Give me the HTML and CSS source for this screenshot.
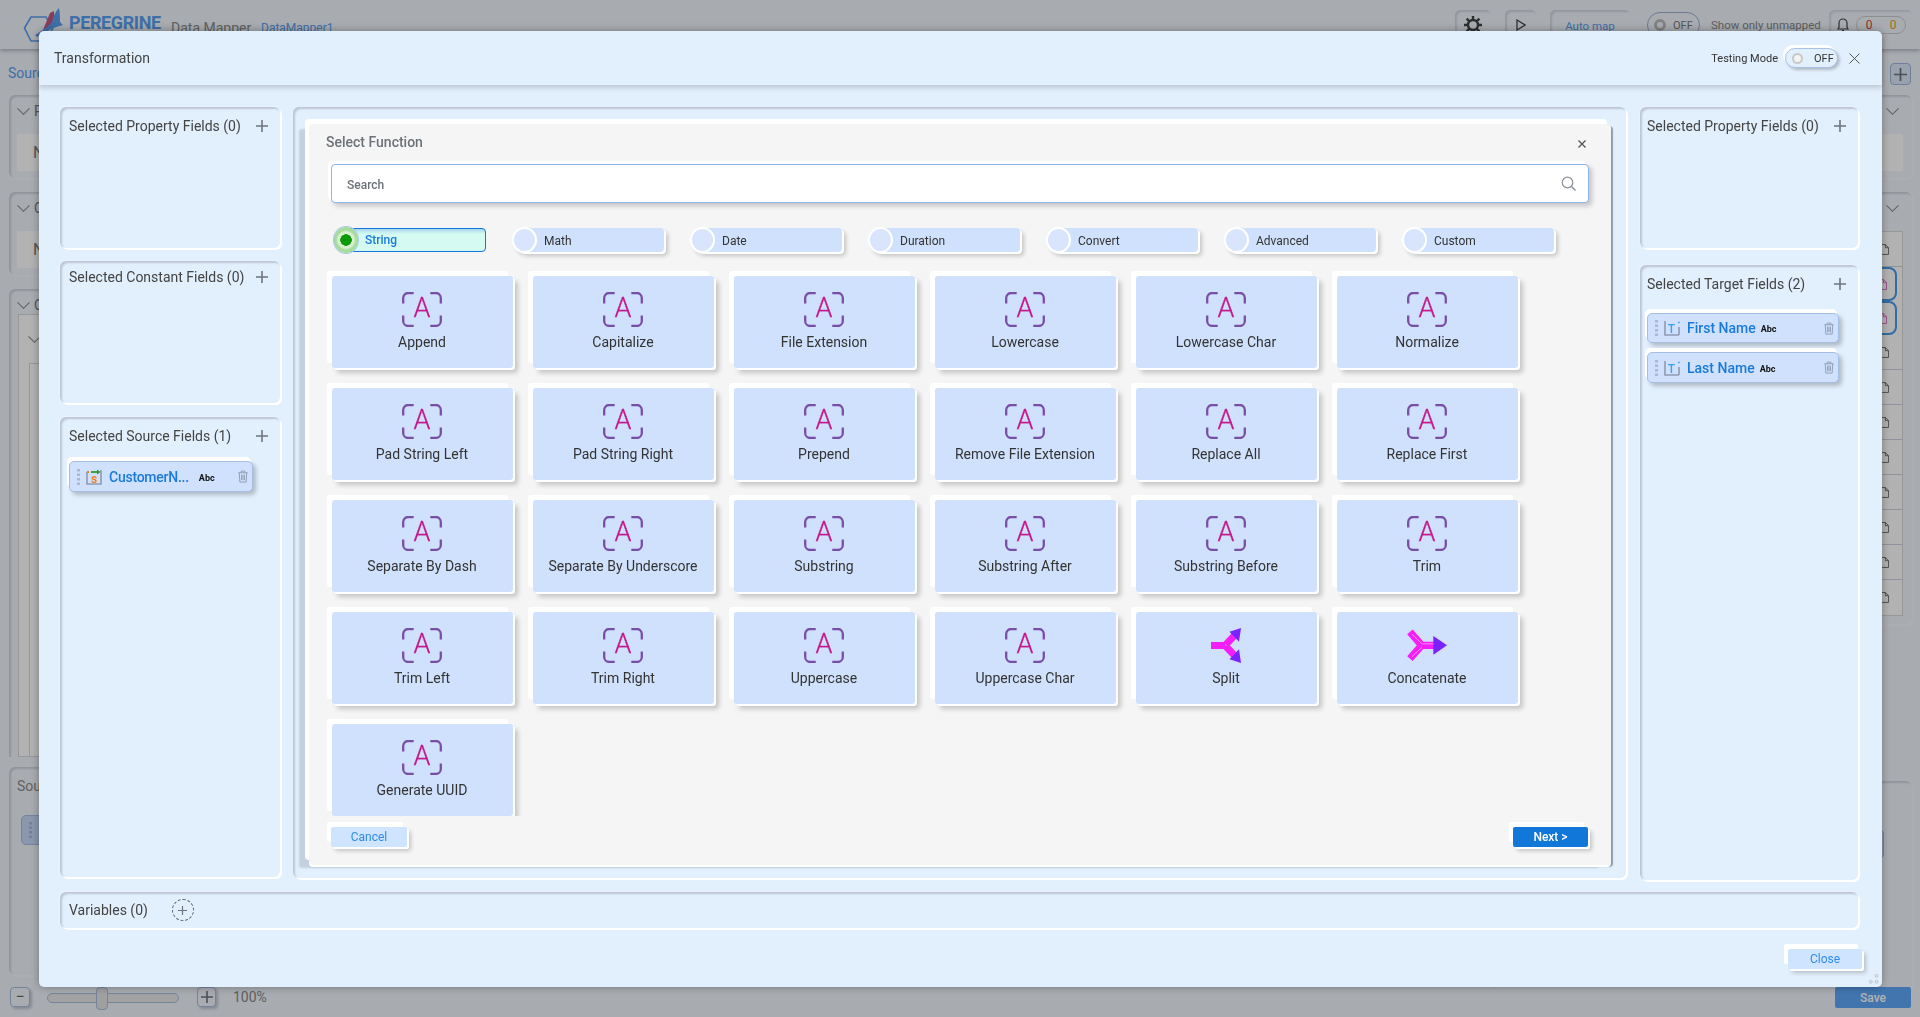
FILE: index.html
```html
<!DOCTYPE html>
<html lang="en">
<head>
<meta charset="utf-8">
<title>Peregrine Data Mapper</title>
<link rel="stylesheet" href="styles.css">
</head>
<body>
<svg class="defs" aria-hidden="true">
  <symbol id="ic-a" viewBox="0 0 40 35">
    <path class="ic-br" d="M1.200 11.500V6a5 5 0 0 1 5-5h5.500M28.300 1h5.500a5 5 0 0 1 5 5v5.500M38.800 23.500V29a5 5 0 0 1-5 5h-5.500M11.700 34H6.200a5 5 0 0 1-5-5v-5.500"/>
    <text class="ic-letter" x="20" y="25" text-anchor="middle">A</text>
  </symbol>
  <symbol id="ic-trash" viewBox="0 0 12 14">
    <path d="M1 3h10M4 3V1.200h4V3M2 3l.6 10h6.800L10 3M4.500 5v6M6 5v6M7.500 5v6" fill="none" stroke="#8d9cb4" stroke-width="1"/>
  </symbol>
  <symbol id="ic-dots" viewBox="0 0 3 16">
    <rect width="3" height="2.500" y="0" fill="#a8b8d4"/><rect width="3" height="2.500" y="4.500" fill="#a8b8d4"/><rect width="3" height="2.500" y="9" fill="#a8b8d4"/><rect width="3" height="2.500" y="13.500" fill="#a8b8d4"/>
  </symbol>
  <symbol id="ic-plus" viewBox="0 0 12 12">
    <path d="M6 0v12M0 6h12" stroke="#6e747c" stroke-width="1.600" fill="none"/>
  </symbol>
  <symbol id="ic-doc" viewBox="0 0 10 12">
    <path d="M.5.5h5.500l3.500 3.500v7.500h-9zM6 .5V4h3.500" fill="none" stroke="currentColor" stroke-width="1"/>
  </symbol>
</svg>

<div class="page">
  <header class="topbar">
    <div class="brand">
      <svg class="logo" viewBox="0 0 42 34" width="42" height="34">
        <path d="M1.500 20L8 9h15l7 11-7 13H8z" fill="none" stroke="#5a9ff0" stroke-width="1.600"/>
        <path d="M20 22L27 5l4-2v15z" fill="#c4557f"/>
        <path d="M12 27C20 22 26 18 29 14 30 8 33 3 36 0c1 5 1 10 1 14l3 3-10 3-16 9z" fill="#5a9ff0"/>
      </svg>
      <span class="brand-name">PEREGRINE</span>
      <span class="brand-app">Data Mapper</span>
      <span class="brand-doc">DataMapper1</span>
    </div>
    <div class="tools">
      <button class="tool tool-icon">
        <svg viewBox="0 0 18 18" width="18" height="18"><circle cx="9" cy="9" r="5" fill="none" stroke="#444" stroke-width="2.400"/><path d="M9 0v4M9 14v4M0 9h4M14 9h4M2.600 2.600l2.800 2.800M12.600 12.600l2.800 2.800M15.400 2.600l-2.800 2.800M5.400 12.600l-2.800 2.800" stroke="#444" stroke-width="2.400"/></svg>
      </button>
      <button class="tool tool-play">
        <svg viewBox="0 0 10 12" width="10" height="12"><path d="M1 1l8 5-8 5z" fill="none" stroke="#444" stroke-width="1.300"/></svg>
      </button>
      <button class="tool tool-auto">Auto map</button>
      <div class="bg-toggle"><span class="bg-knob"></span>OFF</div>
      <span class="unmapped">Show only unmapped</span>
      <div class="counts">
        <svg viewBox="0 0 12 14" width="12" height="14"><path d="M6 1a4 4 0 0 0-4 4v4L1 11h10L10 9V5a4 4 0 0 0-4-4zM5 12.500h2" fill="none" stroke="#444" stroke-width="1.200"/></svg>
        <div class="count-pill"><span class="c-red">0</span><span class="c-orange">0</span></div>
      </div>
    </div>
  </header>

  <div class="bg-tabs">
    <span class="bg-tab">Sources</span>
    <button class="bg-add"><svg width="13" height="13"><use href="#ic-plus"/></svg></button>
  </div>

  <div class="bg-main">
    <div class="bg-col">
      <section class="bg-panel bg-short"><div class="bg-head"><i class="chev"></i>P</div><div class="bg-cell">N</div></section>
      <section class="bg-panel bg-short"><div class="bg-head"><i class="chev"></i>C</div><div class="bg-cell">N</div></section>
      <section class="bg-panel bg-tall">
        <div class="bg-head"><i class="chev"></i>C</div>
        <div class="bg-tree"><div class="bg-head bg-head-in"><i class="chev"></i></div><div class="bg-tree-in"></div></div>
      </section>
      <section class="bg-panel bg-bottom"><div class="bg-src">Sou</div><div class="bg-chip"><svg width="3" height="16"><use href="#ic-dots"/></svg></div></section>
    </div>
    <div class="bg-col bg-col-right">
      <section class="bg-panel bg-short"><div class="bg-head bg-head-r"><i class="chev"></i></div><div class="bg-cell"></div></section>
      <section class="bg-panel bg-list">
        <div class="bg-head bg-head-r"><i class="chev"></i></div>
        <ul class="bg-rows">
          <li><svg width="9" height="11"><use href="#ic-doc"/></svg></li>
          <li class="sel"><svg width="9" height="11"><use href="#ic-doc"/></svg></li>
          <li class="sel"><svg width="9" height="11"><use href="#ic-doc"/></svg></li>
          <li><svg width="9" height="11"><use href="#ic-doc"/></svg></li>
          <li><svg width="9" height="11"><use href="#ic-doc"/></svg></li>
          <li><svg width="9" height="11"><use href="#ic-doc"/></svg></li>
          <li><svg width="9" height="11"><use href="#ic-doc"/></svg></li>
          <li><svg width="9" height="11"><use href="#ic-doc"/></svg></li>
          <li><svg width="9" height="11"><use href="#ic-doc"/></svg></li>
          <li><svg width="9" height="11"><use href="#ic-doc"/></svg></li>
          <li><svg width="9" height="11"><use href="#ic-doc"/></svg></li>
        </ul>
      </section>
      <section class="bg-panel bg-bottom bg-bottom-r"><div class="bg-chip bg-chip-r"></div></section>
    </div>
  </div>

  <footer class="bg-foot">
    <button class="bg-zoom">−</button>
    <div class="bg-slider"><span class="bg-thumb"></span></div>
    <button class="bg-zoom bg-zoom-plus"><svg width="12" height="12"><use href="#ic-plus"/></svg></button>
    <span class="bg-pct">100%</span>
    <button class="bg-save">Save</button>
  </footer>
</div>

<div class="backdrop"></div>

<div class="modal">
  <header class="modal-head">
    <h1 class="modal-title">Transformation</h1>
    <div class="modal-tools">
      <span class="test-label">Testing Mode</span>
      <div class="toggle"><span class="knob"></span><span>OFF</span></div>
      <svg class="modal-x" viewBox="0 0 11 11" width="11" height="11"><path d="M.5.5l10 10M10.500.5l-10 10" stroke="#555" stroke-width="1"/></svg>
    </div>
  </header>

  <div class="modal-body">
    <div class="col col-left">
      <section class="panel h-141">
        <div class="panel-head"><span>Selected Property Fields (0)</span><svg class="plus" width="12" height="12"><use href="#ic-plus"/></svg></div>
      </section>
      <section class="panel h-142 gap-13">
        <div class="panel-head head-tight"><span>Selected Constant Fields (0)</span><svg class="plus" width="12" height="12"><use href="#ic-plus"/></svg></div>
      </section>
      <section class="panel h-460 gap-14">
        <div class="panel-head"><span>Selected Source Fields (1)</span><svg class="plus" width="12" height="12"><use href="#ic-plus"/></svg></div>
        <div class="chip chip-source">
          <svg class="chip-dots" width="3" height="16"><use href="#ic-dots"/></svg>
          <svg class="chip-icon" viewBox="0 0 16 16" width="16" height="16">
            <path d="M1 3v12h14V1" fill="none" stroke="#8f9bb2" stroke-width="1.600"/>
            <path d="M1 3h2" stroke="#f07f22" stroke-width="2"/>
            <path d="M5 3h8" stroke="#2f9a35" stroke-width="1.800"/>
            <path d="M11 .5L14.500 3 11 5.500z" fill="#2f9a35"/>
            <text class="chip-s" x="8" y="14" text-anchor="middle">s</text>
          </svg>
          <span class="chip-name chip-name-source">CustomerN...</span>
          <span class="chip-type type-wide">Abc</span>
          <svg class="chip-trash" width="12" height="13"><use href="#ic-trash"/></svg>
        </div>
      </section>
    </div>

    <section class="center">
      <div class="dialog">
        <div class="dialog-head">
          <h2 class="dialog-title">Select Function</h2>
          <svg class="dialog-x" viewBox="0 0 8 8" width="8" height="8"><path d="M.5.5l7 7M7.500.5l-7 7" stroke="#555" stroke-width="1.300"/></svg>
        </div>
        <div class="search">
          <span class="search-text">Search</span>
          <svg class="search-icon" viewBox="0 0 15 15" width="15" height="15"><circle cx="6.500" cy="6.500" r="5.300" fill="none" stroke="#8a9097" stroke-width="1.200"/><path d="M10.500 10.500l4 4" stroke="#8a9097" stroke-width="1.400"/></svg>
        </div>
        <div class="pills">
          <div class="pill pill-on"><span class="radio"></span>String</div>
          <div class="pill"><span class="radio"></span>Math</div>
          <div class="pill"><span class="radio"></span>Date</div>
          <div class="pill"><span class="radio"></span>Duration</div>
          <div class="pill"><span class="radio"></span>Convert</div>
          <div class="pill"><span class="radio"></span>Advanced</div>
          <div class="pill"><span class="radio"></span>Custom</div>
        </div>
        <div class="fn-list">
          <div class="fn"><svg class="fn-a"><use href="#ic-a"/></svg><span>Append</span></div>
          <div class="fn"><svg class="fn-a"><use href="#ic-a"/></svg><span>Capitalize</span></div>
          <div class="fn"><svg class="fn-a"><use href="#ic-a"/></svg><span>File Extension</span></div>
          <div class="fn"><svg class="fn-a"><use href="#ic-a"/></svg><span>Lowercase</span></div>
          <div class="fn"><svg class="fn-a"><use href="#ic-a"/></svg><span>Lowercase Char</span></div>
          <div class="fn"><svg class="fn-a"><use href="#ic-a"/></svg><span>Normalize</span></div>
          <div class="fn"><svg class="fn-a"><use href="#ic-a"/></svg><span>Pad String Left</span></div>
          <div class="fn"><svg class="fn-a"><use href="#ic-a"/></svg><span>Pad String Right</span></div>
          <div class="fn"><svg class="fn-a"><use href="#ic-a"/></svg><span>Prepend</span></div>
          <div class="fn"><svg class="fn-a"><use href="#ic-a"/></svg><span>Remove File Extension</span></div>
          <div class="fn"><svg class="fn-a"><use href="#ic-a"/></svg><span>Replace All</span></div>
          <div class="fn"><svg class="fn-a"><use href="#ic-a"/></svg><span>Replace First</span></div>
          <div class="fn"><svg class="fn-a"><use href="#ic-a"/></svg><span>Separate By Dash</span></div>
          <div class="fn"><svg class="fn-a"><use href="#ic-a"/></svg><span>Separate By Underscore</span></div>
          <div class="fn"><svg class="fn-a"><use href="#ic-a"/></svg><span>Substring</span></div>
          <div class="fn"><svg class="fn-a"><use href="#ic-a"/></svg><span>Substring After</span></div>
          <div class="fn"><svg class="fn-a"><use href="#ic-a"/></svg><span>Substring Before</span></div>
          <div class="fn"><svg class="fn-a"><use href="#ic-a"/></svg><span>Trim</span></div>
          <div class="fn"><svg class="fn-a"><use href="#ic-a"/></svg><span>Trim Left</span></div>
          <div class="fn"><svg class="fn-a"><use href="#ic-a"/></svg><span>Trim Right</span></div>
          <div class="fn"><svg class="fn-a"><use href="#ic-a"/></svg><span>Uppercase</span></div>
          <div class="fn"><svg class="fn-a"><use href="#ic-a"/></svg><span>Uppercase Char</span></div>
          <div class="fn">
            <svg class="fn-a" viewBox="0 0 30 35" width="30" height="35">
              <path d="M0 17.500h14L24 7M14 17.500L24 28" fill="none" stroke="#f61ef6" stroke-width="7"/>
              <path d="M18.500 3.700L30 0l-2 13.700zM18.500 31.300L30 35l-2-13.700z" fill="#7a22ff"/>
              <path d="M14 16.500l1.500 1" stroke="#fff" stroke-width=".7" opacity=".8"/>
            </svg>
            <span>Split</span>
          </div>
          <div class="fn">
            <svg class="fn-a" viewBox="0 0 41 35" width="41" height="35">
              <path d="M3 3.500L15 17.300 3 31M15 17.300H28" fill="none" stroke="#f61ef6" stroke-width="7.500"/>
              <path d="M27 7.700L41 17.300 27 27z" fill="#7a22ff"/>
              <path d="M5 6l10.500 9.800H27M5 29l10.500-9.800" fill="none" stroke="#fff" stroke-width=".7" opacity=".75"/>
            </svg>
            <span>Concatenate</span>
          </div>
          <div class="fn"><svg class="fn-a"><use href="#ic-a"/></svg><span>Generate UUID</span></div>
        </div>
        <div class="dialog-foot">
          <button class="btn">Cancel</button>
          <button class="btn btn-primary">Next &gt;</button>
        </div>
      </div>
    </section>

    <div class="col col-right">
      <section class="panel h-141">
        <div class="panel-head head-right"><span>Selected Property Fields (0)</span><svg class="plus" width="12" height="12"><use href="#ic-plus"/></svg></div>
      </section>
      <section class="panel h-615 gap-17">
        <div class="panel-head head-right"><span>Selected Target Fields (2)</span><svg class="plus" width="12" height="12"><use href="#ic-plus"/></svg></div>
        <div class="chip chip-target">
          <svg class="chip-dots" width="3" height="16"><use href="#ic-dots"/></svg>
          <svg class="chip-icon" viewBox="0 0 16 16" width="16" height="16">
            <path d="M1 1v14h14M15 7v8" fill="none" stroke="#8f9bb2" stroke-width="1.600"/>
            <path d="M14.200 2.500h1.600" stroke="#3ba4e6" stroke-width="1.600"/>
            <text class="chip-t" x="7.500" y="13" text-anchor="middle">T</text>
          </svg>
          <span class="chip-name">First Name</span>
          <span class="chip-type">Abc</span>
          <svg class="chip-trash" width="12" height="13"><use href="#ic-trash"/></svg>
        </div>
        <div class="chip chip-target chip-next">
          <svg class="chip-dots" width="3" height="16"><use href="#ic-dots"/></svg>
          <svg class="chip-icon" viewBox="0 0 16 16" width="16" height="16">
            <path d="M1 1v14h14M15 7v8" fill="none" stroke="#8f9bb2" stroke-width="1.600"/>
            <path d="M14.200 2.500h1.600" stroke="#3ba4e6" stroke-width="1.600"/>
            <text class="chip-t" x="7.500" y="13" text-anchor="middle">T</text>
          </svg>
          <span class="chip-name">Last Name</span>
          <span class="chip-type">Abc</span>
          <svg class="chip-trash" width="12" height="13"><use href="#ic-trash"/></svg>
        </div>
      </section>
    </div>
  </div>

  <section class="panel variables">
    <span>Variables (0)</span>
    <span class="var-add"><svg width="9" height="9"><use href="#ic-plus"/></svg></span>
  </section>

  <div class="modal-foot"><button class="btn btn-close">Close</button></div>

  <svg class="resize" viewBox="0 0 10 10" width="10" height="10"><circle cx="7.500" cy="1.800" r="1.400"/><circle cx="1.800" cy="7.800" r="1.400"/><circle cx="7.500" cy="7.800" r="1.400"/></svg>
</div>
</body>
</html>
```

FILE: styles.css
```css
* { box-sizing: border-box; }
html, body { margin: 0; padding: 0; height: 100%; overflow: hidden; }
body {
  font-family: Roboto, "Liberation Sans", sans-serif;
  font-size: 14px;
  color: #333;
  background: #f1f6fe;
}
button { font-family: inherit; padding: 0; border: 0; }
h1, h2, ul { margin: 0; padding: 0; font-weight: 400; }
.defs { display: none; }

.ic-br { fill: none; stroke: #7a4ea6; stroke-width: 2.300; }
.ic-letter { font-family: Roboto, sans-serif; font-weight: 300; font-size: 27px; fill: #c4188b; stroke: #c4188b; stroke-width: .3; }

/* ---------- page behind the dialog ---------- */
.page { width: 1920px; height: 1017px; display: flex; flex-direction: column; }
.topbar {
  height: 49px; flex: none; display: flex; justify-content: space-between; align-items: flex-start;
  box-shadow: 0 2px 4px rgba(0,0,0,.25); padding: 8px 8px 0 23px;
}
.brand { display: flex; align-items: flex-start; }
.logo { flex: none; display: block; }
.brand-name { font-size: 18px; font-weight: 700; color: #5a9ff0; margin: 3px 0 0 4px; width: 102px; line-height: 24px; letter-spacing: -.4px; }
.brand-app { font-size: 14px; color: #8a8a8a; line-height: 20px; margin: 10px 0 0 0; width: 90px; }
.brand-doc { font-size: 12px; color: #5a9ff0; line-height: 20px; margin: 10px 0 0 0; }
.tools { display: flex; align-items: center; height: 30px; margin-top: 2px; }
.tool { height: 30px; background: #f1f6fe; border-radius: 5px; box-shadow: inset 2px 2px 2px rgba(0,0,0,.12); display: flex; align-items: center; justify-content: center; }
.tool-icon { width: 36px; margin-right: 14px; }
.tool-play { width: 31px; margin-right: 14px; }
.tool-auto { width: 80px; margin-right: 17px; color: #5a9ff0; font-size: 11.500px; padding-top: 2px; }
.bg-toggle { width: 53px; height: 26px; border: 1px solid #9cb0d0; border-radius: 13px; font-size: 11px; color: #777; display: flex; align-items: center; gap: 7px; padding-left: 6px; }
.bg-knob { width: 12px; height: 12px; border-radius: 50%; border: 3px solid #bbb; }
.unmapped { font-size: 11.500px; color: #888; margin: 0 13px 0 11px; width: 105px; white-space: nowrap; }
.counts { display: flex; align-items: center; gap: 7px; height: 30px; padding-left: 8px; width: 83px; border-radius: 5px; box-shadow: inset 2px 2px 2px rgba(0,0,0,.1); }
.count-pill { width: 50px; height: 18px; border-radius: 9px; border: 1px solid #ccc; display: flex; justify-content: space-around; font-size: 12px; line-height: 16px; }
.c-red { color: #e53935; } .c-orange { color: #f09a1a; }

.bg-tabs { height: 46px; flex: none; display: flex; justify-content: space-between; padding: 14px 9px 0 8px; }
.bg-tab { color: #5a9ff0; font-size: 14px; line-height: 20px; }
.bg-add { width: 21px; height: 22px; background: #dbe7fb; border: 1px solid #9fb5dc; border-radius: 4px; display: flex; align-items: center; justify-content: center; }

.bg-main { flex: none; display: flex; justify-content: space-between; padding: 0 8px 0 9px; height: 880px; }
.bg-col { width: 420px; display: flex; flex-direction: column; gap: 14px; }
.bg-panel { border-radius: 6px; box-shadow: inset 2px 2px 2px rgba(0,0,0,.14), 1px 1px 0 1px rgba(255,255,255,.4); }
.bg-short { height: 83px; flex: none; }
.bg-tall { height: 468px; flex: none; border-radius: 6px 6px 0 0; box-shadow: inset 2px 2px 2px rgba(0,0,0,.14); }
.bg-bottom { height: 208px; flex: none; margin-top: -4px; }
.bg-list { height: 432px; flex: none; }
.bg-bottom-r { margin-top: 143px; position: relative; }
.bg-head { height: 39px; padding: 0 0 7px 10px; display: flex; align-items: center; gap: 5px; color: #777; }
.bg-head-r { justify-content: flex-end; padding: 0 14px 7px 0; }
.bg-head-in { padding: 0 0 0 11px; height: 48px; }
.chev { width: 9px; height: 9px; border-right: 1.500px solid #8c8c8c; border-bottom: 1.500px solid #8c8c8c; transform: rotate(45deg) translate(-2px,-2px); display: block; margin-right: 1px; }
.bg-cell { margin: 0 9px 0 8px; height: 37px; background: #fff; color: #777; font-size: 16px; padding: 9px 0 0 16px; }
.bg-tree { margin: -14px 0 0 9px; height: 443px; background: #fff; border: 1px solid #d8d8d8; }
.bg-tree-in { margin-left: 10px; height: 394px; border-left: 1px solid #d8d8d8; border-top: 1px solid #d8d8d8; }
.bg-src { color: #8a8a8a; padding: 10px 0 0 8px; font-size: 14px; line-height: 18px; }
.bg-chip { margin: 20px 0 0 12px; width: 60px; height: 30px; background: #c6d9f8; border: 1px solid #a8bee2; border-radius: 5px; padding: 6px 0 0 7px; }
.bg-chip-r { margin: 48px 0 0 auto; width: 60px; margin-right: 28px; }
.bg-rows { list-style: none; margin: 0 9px 0 0; background: #fff; border: 1px solid #d8d8d8; }
.bg-rows li { height: 35px; border-bottom: 1px solid #d0d0e0; color: #666; display: flex; justify-content: flex-end; align-items: center; padding-right: 13px; }
.bg-rows li:last-child { border-bottom: 0; }
.bg-rows li.sel { color: #e062c8; border: 2.500px solid #4a9ae8; border-radius: 8px; background: #fff; margin-right: 5px; padding-right: 8px; height: 34px; }
.bg-foot { position: relative; flex: none; height: 30px; display: flex; align-items: flex-start; padding: 0 9px 0 10px; margin-top: 12px; }
.bg-zoom { width: 20px; height: 20px; border: 1px solid #a8bee2; border-radius: 4px; background: #f1f6fe; color: #666; font-size: 16px; line-height: 16px; box-shadow: 2px 2px 3px rgba(0,0,0,.2); display: flex; align-items: center; justify-content: center; }
.bg-zoom-plus { margin-left: 18px; width: 19px; }
.bg-slider { position: relative; width: 132px; height: 10px; margin: 6px 0 0 17px; background: #e8e8e8; border: 1px solid #a8bee2; border-radius: 5px; }
.bg-thumb { position: absolute; left: 48px; top: -7px; width: 12px; height: 23px; background: #e6e6e6; border: 1px solid #a8bee2; border-radius: 4px; }
.bg-pct { margin-left: 17px; color: #888; font-size: 14px; line-height: 20px; }
.bg-save { margin-left: auto; width: 76px; height: 21px; background: #5fa8fa; color: #fff; font-size: 12px; border-radius: 2px; font-weight: 500; }

.backdrop { position: fixed; inset: 0; background: rgba(0,0,0,.3); }

/* ---------- modal ---------- */
.modal {
  position: fixed; left: 39px; top: 31px; width: 1843px; height: 956px;
  background: #e2effc; border-radius: 5px;
  box-shadow: 0 0 8px rgba(0,0,0,.35);
}
.modal-head {
  height: 54px; display: flex; justify-content: space-between; align-items: center;
  padding: 0 22px 0 15px; border-radius: 5px 5px 0 0;
  box-shadow: 0 3px 5px rgba(0,0,0,.16);
}
.modal-title { font-size: 14px; color: #444; }
.modal-tools { display: flex; align-items: center; }
.test-label { font-size: 11px; color: #333; margin-right: 7px; }
.toggle {
  width: 53px; height: 20px; border-radius: 10px; background: #e2effc;
  border: 1px solid #a9c0e8; box-shadow: 2px 2px 3px rgba(0,0,0,.22), -2px -3px 0 #fff;
  font-size: 11px; color: #333; display: flex; align-items: center; gap: 11px; padding-left: 6px;
}
.knob { width: 11px; height: 11px; border-radius: 50%; background: #f3f3f3; border: 2.500px solid #c8c8c8; }
.modal-x { margin-left: 11px; }

.modal-body { display: flex; align-items: flex-start; padding: 22px 0 0 21px; }
.col { display: flex; flex-direction: column; flex: none; }
.col-left { width: 220px; }
.col-right { width: 218px; margin-left: 14px; }
.panel {
  border-radius: 6px; background: #e2effc;
  box-shadow: inset 2px 2px 2px rgba(90,90,110,.28), 2px 2px 0 #fff, -1px -1px 1px rgba(255,255,255,.3);
}
.h-141 { height: 141px; } .h-142 { height: 142px; } .h-460 { height: 460px; } .h-615 { height: 615px; }
.gap-13 { margin-top: 13px; } .gap-14 { margin-top: 14px; } .gap-17 { margin-top: 17px; }
.panel-head {
  display: flex; justify-content: space-between; align-items: center;
  height: 20px; margin-top: 0; padding: 0 12px 0 9px; transform: translateY(9px);
  color: #444; font-size: 14px; white-space: nowrap;
}
.head-tight { transform: translateY(6px); }
.head-right { padding-left: 7px; }
.plus { flex: none; }

.center {
  flex: none; width: 1333px; height: 771px; margin-left: 13px; padding: 17px 0 0 16px;
  border-radius: 6px; background: #e2effc;
  box-shadow: inset 2px 2px 2px rgba(90,90,110,.28), 2px 2px 0 #fff;
}
.dialog {
  width: 1302px; height: 741px; background: #f5f5f5; border-radius: 4px;
  box-shadow: -4px -5px 0 #fff, 0 2px 0 #fff, 2px 2px 1px #8f9cb0, -11px 4px 2px -1px #c4d0df;
}
.dialog-head { height: 40px; display: flex; justify-content: space-between; align-items: center; padding: 0 25px 4px 17px; }
.dialog-title { font-size: 14px; font-weight: 500; color: #6d7278; }
.dialog-x { margin-top: 4px; }
.search {
  margin: 0 0 0 22px; width: 1258px; height: 39px; background: #fff;
  border: 1px solid #8fb4ea; border-radius: 4px;
  box-shadow: -3px -3px 0 #fff, 3px 3px 5px rgba(0,0,0,.2);
  display: flex; align-items: center; justify-content: space-between; padding: 0 12px 0 15px;
}
.search-text { font-size: 12px; color: #6d7278; font-weight: 500; padding-top: 2px; }
.pills { display: flex; gap: 26px; margin: 25px 0 0 25px; }
.pill {
  position: relative; width: 152px; height: 24px; padding-left: 32px;
  border-radius: 12px 4px 4px 12px; background: #d0e1fd; color: #333;
  font-size: 12px; line-height: 27px;
  box-shadow: 2px 2px 0 #fff, 4px 4px 4px rgba(0,0,0,.2);
}
.radio {
  position: absolute; left: 2px; top: 1px; width: 21px; height: 22px; border-radius: 50%;
  background: #d8e5fd; box-shadow: 0 0 0 2px #fff, -2px 0 2px #fff;
}
.pill-on {
  background: linear-gradient(#a9d5f0 0, #d4faf1 5px); border: 1px solid #1177d9; color: #1a7ad9;
  font-weight: 500; padding-left: 30px; line-height: 22px;
  box-shadow: none; border-radius: 12px 4px 4px 12px;
}
.pill-on .radio {
  left: -1px; top: -2px; width: 24px; height: 26px;
  background: radial-gradient(circle, #0a9a0a 0 5.500px, #d8f0d0 6px 8px, #a7dc9e 10px);
  box-shadow: 0 0 0 1px #a9c8e8;
}
.fn-list {
  height: 550px; margin-top: 14px; padding: 10px 0 0 23px; overflow: hidden;
  display: grid; grid-template-columns: repeat(6, 181px); grid-auto-rows: 92px; gap: 20px;
}
.fn {
  background: #d0e1fd; border-radius: 3px; display: flex; flex-direction: column; align-items: center;
  padding: 16px 1px 0 0; color: #333; font-size: 14px;
  box-shadow: -5px -5px 0 #fff, 2px 2px 0 #fff, 5px 5px 5px rgba(0,0,0,.2);
}
.fn-a { width: 40px; height: 35px; flex: none; margin-right: 1px; }
.fn > span { margin-top: 7px; line-height: 16px; white-space: nowrap; }

.dialog-foot { display: flex; justify-content: space-between; padding: 11px 23px 0 22px; }
.btn {
  width: 76px; height: 20px; border-radius: 2px; background: #cfe5ff; color: #2f8be6; font-size: 12px;
  box-shadow: -4px -5px 0 #fff, 2px 2px 0 #fff, 4px 4px 4px rgba(0,0,0,.2);
}
.btn-primary { background: #1177d9; color: #fff; font-weight: 500; width: 75px; }

.chip {
  display: flex; align-items: center; height: 31px; background: #d0e1fd;
  border: 1px solid #a6bde6; border-radius: 5px;
  box-shadow: -2px -4px 0 #fff, 3px 3px 4px rgba(0,0,0,.22);
}
.chip-source { width: 184px; margin: 24px 0 0 9px; }
.chip-target { width: 192px; margin: 28px 0 0 7px; height: 30px; }
.chip-next { margin-top: 9px; height: 31px; }
.chip-dots { margin-left: 7px; flex: none; }
.chip-icon { margin-left: 6px; flex: none; }
.chip-t { font-family: Roboto, sans-serif; font-weight: 500; font-size: 12px; fill: #3ba4e6; }
.chip-s { font-family: Roboto, sans-serif; font-weight: 700; font-size: 12px; fill: #f07f22; }
.chip-name { margin-left: 7px; color: #1a7ad9; font-weight: 500; font-size: 14px; white-space: nowrap; }
.chip-name-source { letter-spacing: -.25px; }
.chip-type { margin-left: 5px; font-size: 9px; font-weight: 700; color: #111; padding-top: 2px; }
.type-wide { margin-left: 10px; }
.chip-trash { margin-left: auto; margin-right: 3px; flex: none; }

.variables {
  margin: 12px 0 0 21px; width: 1798px; height: 36px; display: flex; align-items: center;
  padding-left: 9px; color: #444; font-size: 14px;
}
.var-add {
  width: 22px; height: 22px; margin-left: 24px; border: 1px dashed #5f6670; border-radius: 50%;
  display: flex; align-items: center; justify-content: center;
}
.modal-foot { display: flex; justify-content: flex-end; padding: 21px 20px 0 0; }
.btn-close { width: 74px; }
.resize { position: absolute; right: 3px; bottom: 3px; fill: none; stroke: #b5bbc4; stroke-width: .9; }
```
